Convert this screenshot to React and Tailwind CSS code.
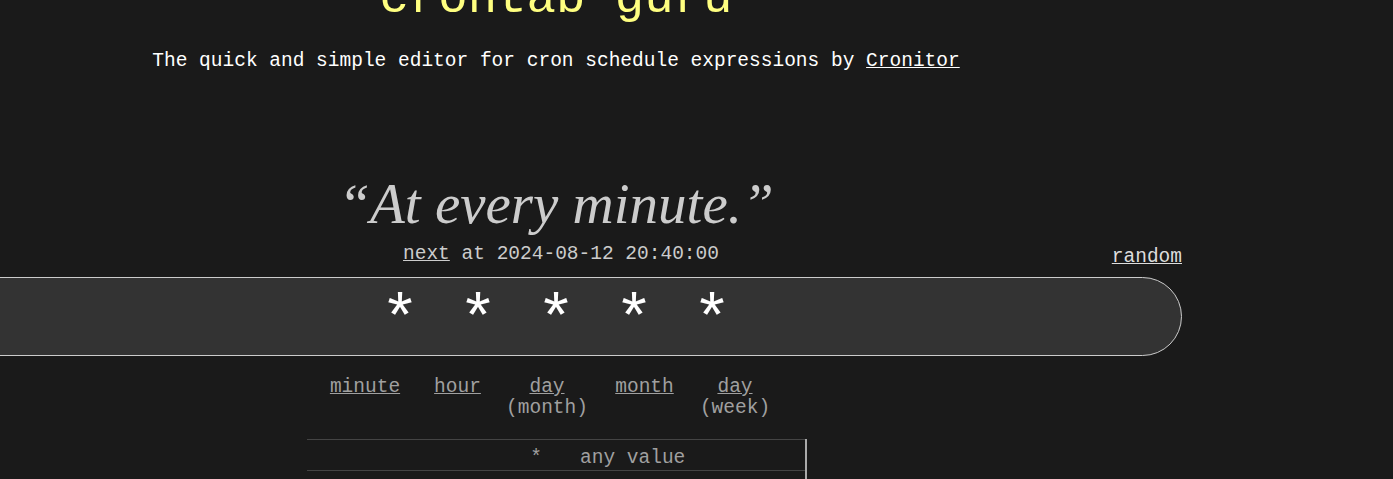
import React from 'react';

const mono = "font-['Liberation_Mono','Courier_New',monospace]";

const fields = [
  { label: 'minute', sub: null, cls: 'w-[70px]' },
  { label: 'hour', sub: null, cls: 'w-[47px] ml-[34px]' },
  { label: 'day', sub: '(month)', cls: 'w-[82px] ml-[25px]' },
  { label: 'month', sub: null, cls: 'w-[59px] ml-[27px]' },
  { label: 'day', sub: '(week)', cls: 'w-[70px] ml-[26px]' },
];

const rows = [
  { sym: '*', desc: 'any value' },
  { sym: ',', desc: 'value list separator' },
  { sym: '-', desc: 'range of values' },
  { sym: '/', desc: 'step values' },
];

export default function App() {
  return (
    <div className={`h-[479px] overflow-hidden bg-[#1a1a1a] ${mono}`}>
      <div className="ml-[-70px] w-[1252px]">
        {/* Header */}
        <h1 className="mt-[-26px] text-center text-[49px] leading-[50px] text-[#ffff80]">crontab guru</h1>
        <p className="mt-[25px] text-center text-[19.5px] leading-[24px] text-white">
          The quick and simple editor for cron schedule expressions by <a href="#" className="underline">Cronitor</a>
        </p>

        {/* Human readable */}
        <div className="mt-[101px] text-center font-['Liberation_Serif',serif] text-[57px] italic leading-[60px] text-[#cccccc]">
          “At every minute.”
        </div>

        <div className="mt-[8px] grid grid-cols-[1fr_auto_1fr] text-[19.5px] leading-[24px] text-[#cccccc]">
          <div />
          <div className="pl-[10px]">
            <a href="#" className="underline">next</a> at 2024-08-12 20:40:00
          </div>
          <div className="mt-[3px] text-right">
            <a href="#" className="text-[#dddddd] underline">random</a>
          </div>
        </div>

        {/* Expression input */}
        <div className="mt-[8px] flex h-[79px] items-center justify-center rounded-r-full border border-[#cccccc] bg-[#333333] pt-[12px]">
          <span className="text-[65px] leading-none text-white">* * * * *</span>
        </div>

        {/* Field labels */}
        <div className="mt-[21px] flex pl-[400px] text-[19.5px] leading-[21px] text-[#a0a0a0]">
          {fields.map((f, i) => (
            <div key={i} className={`flex flex-col items-center ${f.cls}`}>
              <a href="#" className="underline">{f.label}</a>
              {f.sub && <span>{f.sub}</span>}
            </div>
          ))}
        </div>

        {/* Legend table */}
        <div className="ml-[377px] mt-[20px] w-[500px] border-r-2 border-[#aaaaaa] text-[19.5px] text-[#a0a0a0]">
          {rows.map((r, i) => (
            <div key={i} className="grid h-[31px] grid-cols-[273px_1fr] items-center border-t border-[#444444] pt-[4px]">
              <span className="pr-[38px] text-right">{r.sym}</span>
              <span>{r.desc}</span>
            </div>
          ))}
        </div>
      </div>
    </div>
  );
}
